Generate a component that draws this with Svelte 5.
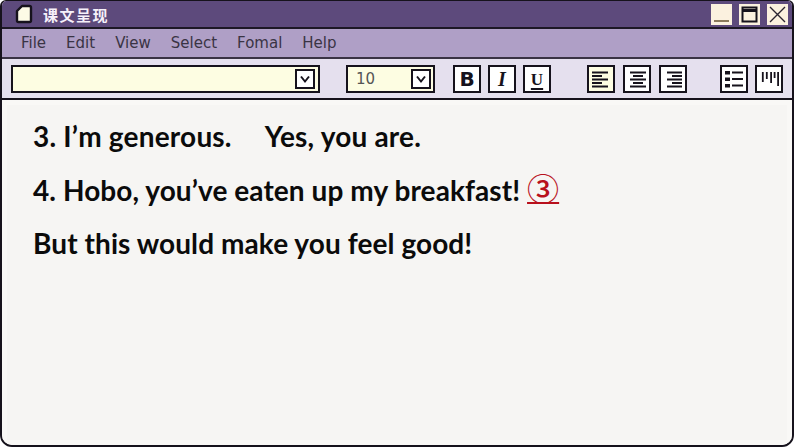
<script>
	const menus = ['File', 'Edit', 'View', 'Select', 'Fomal', 'Help'];
	const aligns = [
		{ name: 'left', tint: true, x: [3, 3, 3, 3, 3], w: [16, 10, 16, 10, 16] },
		{ name: 'center', x: [5, 8, 5, 8, 5], w: [16, 10, 16, 10, 16] },
		{ name: 'right', x: [6, 11, 6, 11, 6], w: [15, 10, 15, 10, 15] }
	];
	const bars = [[5.7, 10], [9.7, 7], [14, 11], [17.5, 6], [21, 14]];
</script>

<div class="window">
	<header class="titlebar">
		<svg class="doc" width="18" height="20" viewBox="0 0 18 20" aria-hidden="true">
			<path d="M7 2H14.500Q16 2 16 3.500V16.500Q16 18 14.500 18H3.500Q2 18 2 16.500V7Z" fill="#fdfbe6" stroke="#16121c" stroke-width="2.4" stroke-linejoin="round" />
		</svg>
		<span class="title">课文呈现</span>
		<div class="controls">
			<button class="ctl" aria-label="minimize">
				<svg width="21" height="21" viewBox="0 0 21 21"><path d="M3 17H18" stroke="#8a7a5c" stroke-width="2" /></svg>
			</button>
			<button class="ctl" aria-label="maximize">
				<svg width="21" height="21" viewBox="0 0 21 21"><rect x="3.5" y="3.5" width="14" height="14" fill="none" stroke="#16121c" stroke-width="2" /><path d="M3 6.500H18" stroke="#16121c" stroke-width="3" /></svg>
			</button>
			<button class="ctl" aria-label="close">
				<svg width="21" height="21" viewBox="0 0 21 21"><path d="M3 3L18 18M18 3L3 18" stroke="#2a2430" stroke-width="1.4" /></svg>
			</button>
		</div>
	</header>

	<nav class="menubar">
		{#each menus as item}
			<span class="menu">{item}</span>
		{/each}
	</nav>

	<div class="toolbar">
		<div class="select family">
			<span class="arrow"><svg width="12" height="12" viewBox="0 0 12 12"><path d="M2 3.500L6 8.500L10 3.500" fill="none" stroke="#16121c" stroke-width="2" /></svg></span>
		</div>
		<div class="select size">
			<span class="value">10</span>
			<span class="arrow"><svg width="12" height="12" viewBox="0 0 12 12"><path d="M2 3.500L6 8.500L10 3.500" fill="none" stroke="#16121c" stroke-width="2" /></svg></span>
		</div>
		<div class="group styles">
			<span class="btn bold">B</span>
			<span class="btn italic">I</span>
			<span class="btn under">U</span>
		</div>
		<div class="group aligns">
			{#each aligns as a}
				<span class="btn" class:tint={a.tint}>
					<svg width="24" height="24" viewBox="0 0 24 24" aria-label={a.name}>
						{#each a.x as x, i}
							<rect {x} y={4.5 + i * 3.5} width={a.w[i]} height="2" fill="#16121c" />
						{/each}
					</svg>
				</span>
			{/each}
		</div>
		<div class="group lists">
			<span class="btn">
				<svg width="24" height="24" viewBox="0 0 24 24" aria-label="list">
					<rect x="3" y="4" width="5" height="3.500" fill="#16121c" />
					<rect x="3" y="10.500" width="5" height="3.500" fill="#16121c" />
					<rect x="3" y="17" width="5" height="3.500" fill="#16121c" />
					<path d="M10 5.500H21M10 12H21M10 18.500H21" stroke="#16121c" stroke-width="1.8" />
				</svg>
			</span>
			<span class="btn">
				<svg width="24" height="24" viewBox="0 0 24 24" aria-label="columns">
					{#each bars as b}
						<rect x={b[0] - 0.8} y="5" width="1.8" height={b[1]} fill="#16121c" />
					{/each}
				</svg>
			</span>
		</div>
	</div>

	<main class="page">
		<p class="first">3. I’m generous.<span class="gap"></span>Yes, you are.</p>
		<p>4. Hobo, you’ve eaten up my breakfast! <span class="mark">③</span></p>
		<p>But this would make you feel good!</p>
	</main>
</div>

<style>
	:global(body) {
		margin: 0;
		background: #fff;
	}

	.window {
		width: 794px;
		height: 447px;
		box-sizing: border-box;
		display: flex;
		flex-direction: column;
		border: 2px solid #16121c;
		border-top-width: 1px;
		border-radius: 6px 6px 12px 12px;
		overflow: hidden;
		background: #f6f5f3;
	}

	.titlebar {
		height: 28px;
		box-sizing: border-box;
		flex: none;
		display: flex;
		align-items: center;
		padding-left: 13px;
		background: #5d4a7c;
		border-bottom: 2px solid #1d1826;
	}
	.doc {
		margin-top: -1px;
	}
	.title {
		margin-left: 10px;
		font: 700 15px/1 "Noto Sans CJK SC", sans-serif;
		letter-spacing: 1.5px;
		color: #f6f1fa;
	}
	.controls {
		margin-left: auto;
		display: flex;
		gap: 7px;
		padding-right: 4px;
	}
	.ctl {
		width: 21px;
		height: 21px;
		padding: 0;
		border: 0;
		display: block;
		background: #fbf1df;
	}
	.ctl svg {
		display: block;
	}

	.menubar {
		height: 30px;
		flex: none;
		box-sizing: border-box;
		display: flex;
		align-items: center;
		gap: 20px;
		padding-left: 19px;
		background: #af9fc6;
		border-bottom: 2px solid #3a3344;
		font: 15px/1 "DejaVu Sans", sans-serif;
		color: #3a3444;
	}

	.toolbar {
		height: 41px;
		flex: none;
		box-sizing: border-box;
		display: flex;
		align-items: flex-start;
		padding: 6px 9px 0;
		background: #e5e0ee;
		border-bottom: 2px solid #16121c;
	}
	.select {
		height: 28px;
		box-sizing: border-box;
		display: flex;
		align-items: center;
		justify-content: flex-end;
		padding-right: 2px;
		background: #fdfde2;
		border: 2px solid #16121c;
	}
	.family {
		width: 309px;
		padding-right: 3px;
	}
	.size {
		width: 89px;
		margin-left: 26px;
		justify-content: space-between;
	}
	.value {
		margin-left: 8px;
		font: 15px/1 "DejaVu Sans", sans-serif;
		color: #555;
	}
	.arrow {
		width: 20px;
		height: 20px;
		box-sizing: border-box;
		display: flex;
		align-items: center;
		justify-content: center;
		background: #fff;
		border: 2px solid #16121c;
	}
	.group {
		display: flex;
		gap: 7px;
	}
	.styles {
		margin-left: 18px;
	}
	.aligns {
		margin-left: 36px;
		gap: 8px;
	}
	.lists {
		margin-left: 33px;
	}
	.btn {
		width: 28px;
		height: 28px;
		box-sizing: border-box;
		display: flex;
		align-items: center;
		justify-content: center;
		background: #fff;
		border: 2px solid #16121c;
		color: #16121c;
	}
	.btn.tint {
		background: #fdfde2;
	}
	.bold {
		font: 700 20px/1 "DejaVu Sans", sans-serif;
	}
	.italic {
		font: italic 700 20px/1 "Liberation Serif", serif;
	}
	.under {
		font: 700 17px/1 "Liberation Serif", serif;
		text-decoration: underline;
		text-decoration-thickness: 2px;
		text-underline-offset: 3px;
	}

	.page {
		flex: 1;
		padding: 18px 31px 0;
		font: 700 28px/36px Lato, sans-serif;
		letter-spacing: 0.08px;
		color: #0b0b0b;
		box-shadow: inset 0 0 0 5px #f9f8f6;
	}
	.page p {
		height: 36px;
		margin: 0 0 18px;
	}
	.page p.first {
		margin-bottom: 17px;
		letter-spacing: 0.2px;
	}
	.gap {
		display: inline-block;
		width: 33px;
	}
	.mark {
		font-family: "Noto Sans CJK SC", sans-serif;
		font-size: 32px;
		line-height: 1;
		font-weight: 500;
		color: #b8101c;
		text-decoration: underline;
		text-decoration-thickness: 2px;
	}
</style>
